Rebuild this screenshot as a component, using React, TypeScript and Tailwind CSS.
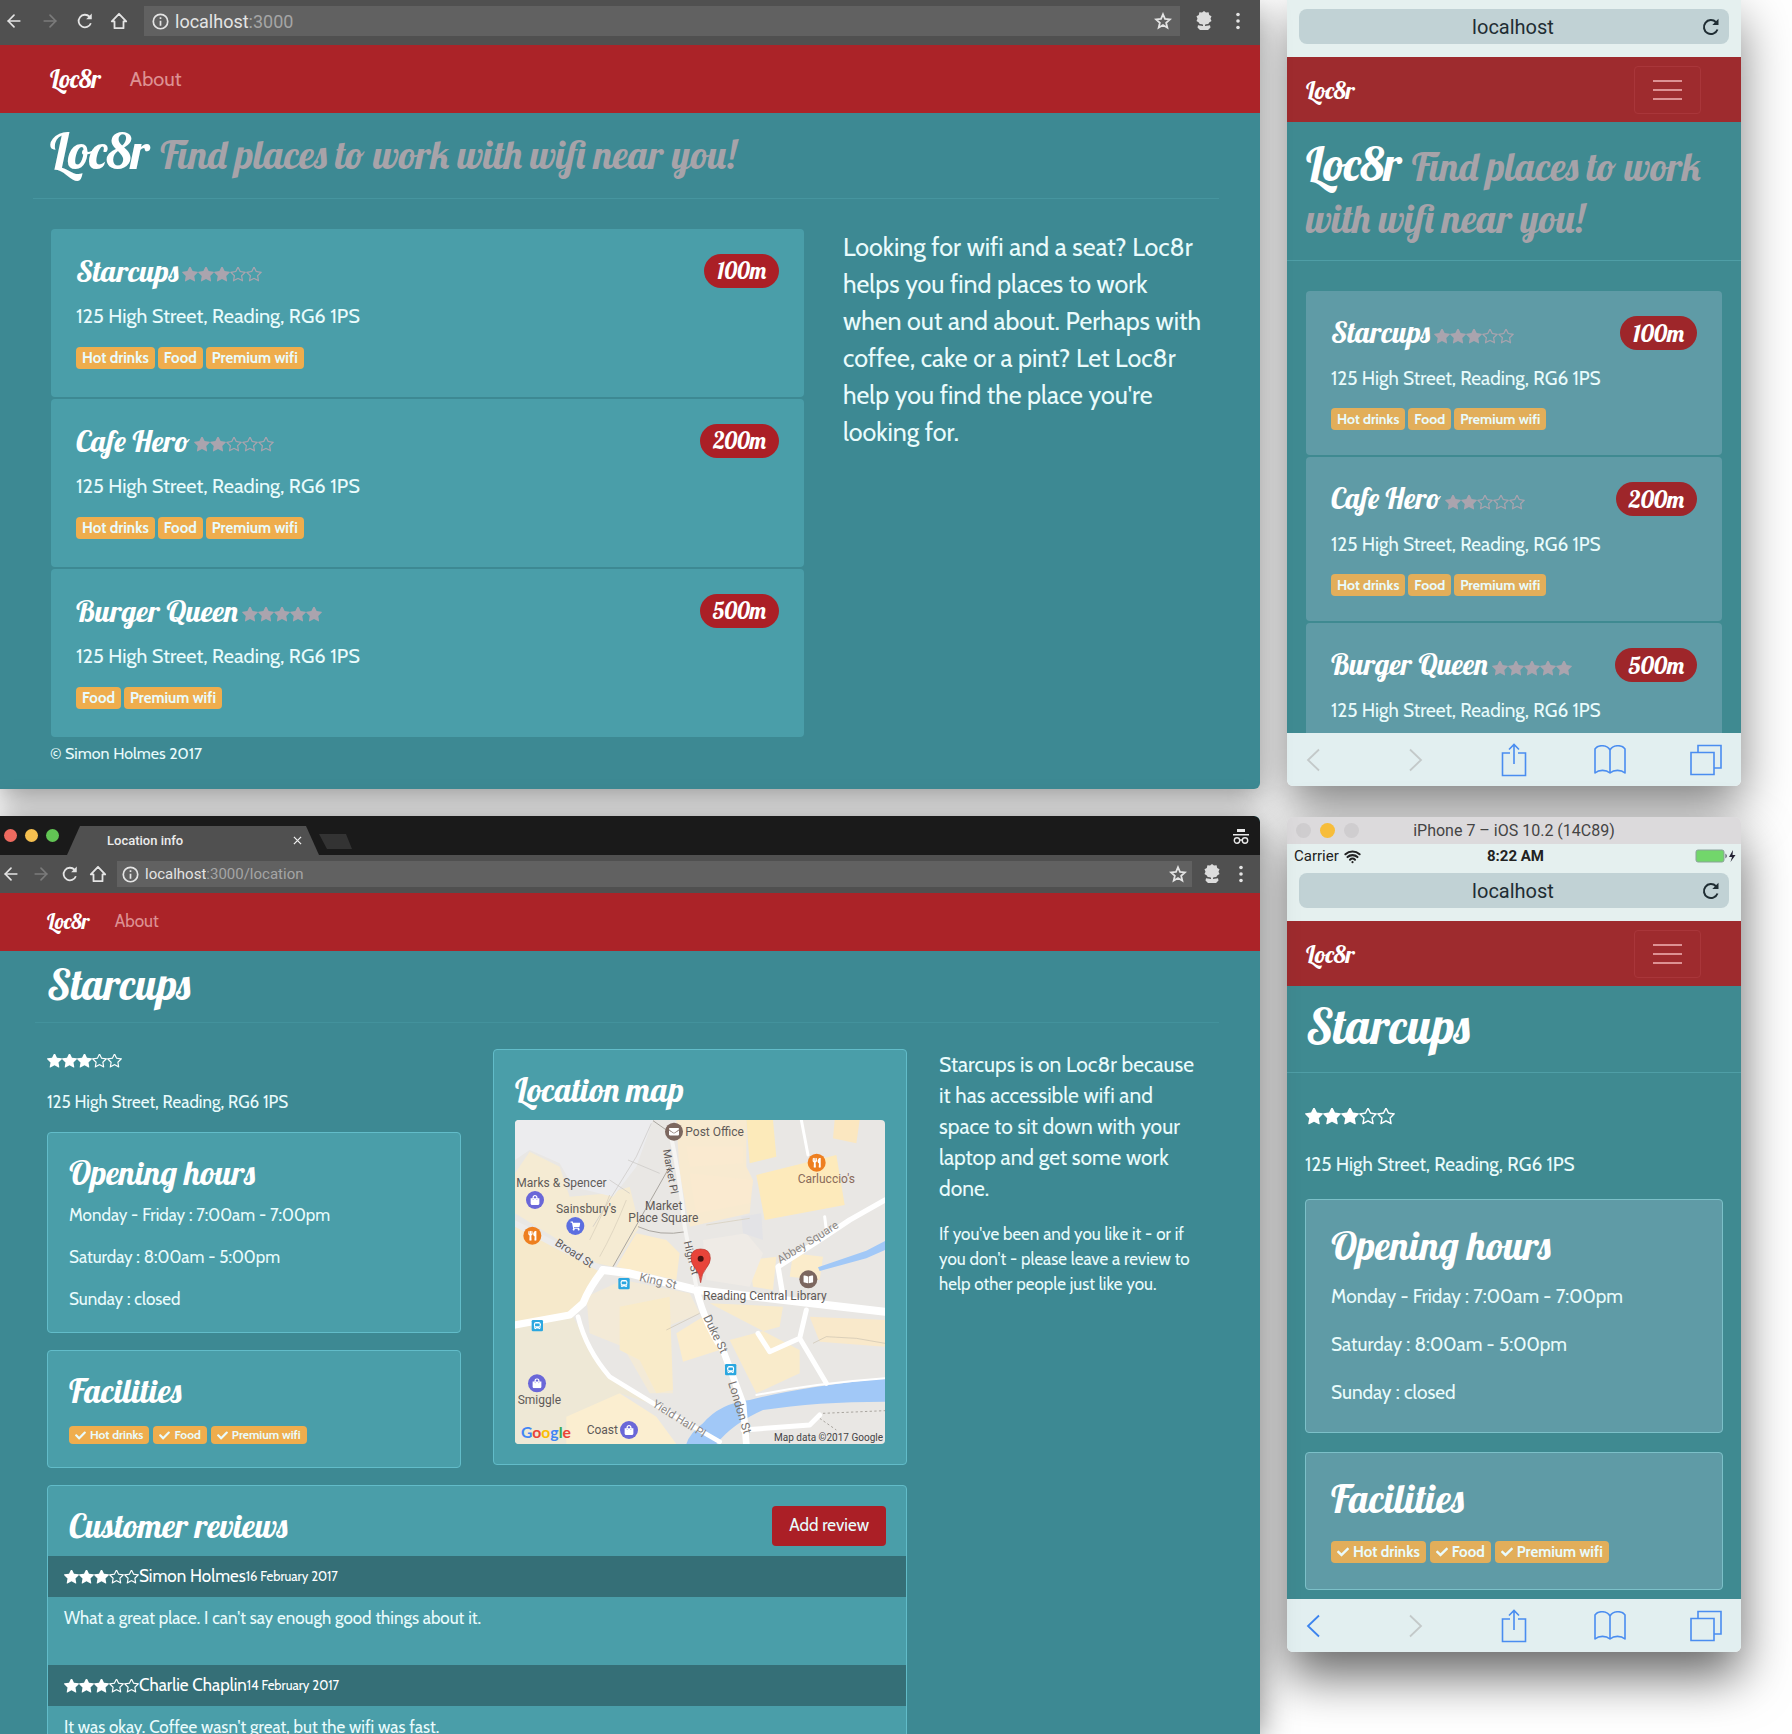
import React from 'react';
import { FaCheck, FaUtensils, FaShoppingCart, FaBookOpen, FaShoppingBag, FaEnvelope, FaBus } from 'react-icons/fa';
import { ArrowLeft, ArrowRight, Wifi } from 'lucide-react';

const STAR =
  'M1664 647q0 22-26 48l-363 354 86 500q1 7 1 20 0 21-10.5 35.5t-30.5 14.5q-19 0-40-12l-449-236-449 236q-22 12-40 12-21 0-31.5-14.5t-10.5-35.5q0-6 2-20l86-500-364-354q-25-27-25-48 0-37 56-46l502-73 225-455q19-41 49-41t49 41l225 455 502 73q56 9 56 46z';
const STAR_OUTLINE =
  'M1137 1004l306-297-422-62-189-382-189 382-422 62 306 297-73 421 378-199 377 199zm527-357q0 22-26 48l-363 354 86 500q1 7 1 20 0 50-41 50-19 0-40-12l-449-236-449 236q-22 12-40 12-21 0-31.5-14.5t-10.5-35.5q0-6 2-20l86-500-364-354q-25-27-25-48 0-37 56-46l502-73 225-455q19-41 49-41t49 41l225 455 502 73q56 9 56 46z';

const places = [
  { name: 'Starcups', rating: 3, distance: '100m', tags: ['Hot drinks', 'Food', 'Premium wifi'] },
  { name: 'Cafe Hero', rating: 2, distance: '200m', tags: ['Hot drinks', 'Food', 'Premium wifi'] },
  { name: 'Burger Queen', rating: 5, distance: '500m', tags: ['Food', 'Premium wifi'] },
];

const address = '125 High Street, Reading, RG6 1PS';
const hours = ['Monday - Friday : 7:00am - 7:00pm', 'Saturday : 8:00am - 5:00pm', 'Sunday : closed'];
const facilities = ['Hot drinks', 'Food', 'Premium wifi'];

const reviews = [
  { author: 'Simon Holmes', date: '16 February 2017', text: "What a great place. I can't say enough good things about it." },
  { author: 'Charlie Chaplin', date: '14 February 2017', text: "It was okay. Coffee wasn't great, but the wifi was fast." },
];

const Stars: React.FC<{ rating: number; className: string }> = ({ rating, className }) => (
  <span className="inline-flex shrink-0" role="img" aria-label={`${rating} out of 5`}>
    {[1, 2, 3, 4, 5].map((n) => (
      <svg key={n} viewBox="0 128 1664 1536" className={className} fill="currentColor">
        <path d={n <= rating ? STAR : STAR_OUTLINE} />
      </svg>
    ))}
  </span>
);

/* ---------- browser chrome ---------- */

const ReloadIcon: React.FC<{ className: string }> = ({ className }) => (
  <svg viewBox="0 0 20 20" className={className} fill="none" stroke="currentColor" strokeWidth="2">
    <path d="M16.5 12.5A7 7 0 1 1 15 5.2" />
    <path d="M17.5 1.8V8h-6.2z" fill="currentColor" stroke="none" />
  </svg>
);

const HomeIcon: React.FC = () => (
  <svg viewBox="0 0 20 20" className="size-[18px]" fill="none" stroke="currentColor" strokeWidth="2">
    <path d="M10 2L2 10.5h3V18h10v-7.5h3z" strokeLinejoin="round" />
  </svg>
);

const ChromeBar: React.FC<{ path: string; className: string; fieldClass: string; textClass: string; endClass: string }> = ({
  path,
  className,
  fieldClass,
  textClass,
  endClass,
}) => (
  <div className={`flex items-center bg-[#505050] text-[#e4e4e4] ${className}`}>
    <button aria-label="Back"><ArrowLeft className="size-5" /></button>
    <button aria-label="Forward" className="text-[#7b7b7b]"><ArrowRight className="size-5" /></button>
    <button aria-label="Reload"><ReloadIcon className="size-[18px]" /></button>
    <button aria-label="Home"><HomeIcon /></button>
    <div className={`flex flex-1 items-center bg-[#616161] ${fieldClass}`}>
      <label className="flex flex-1 items-center">
        <svg viewBox="0 0 20 20" className="mr-[6px] size-[17px]" fill="none" stroke="currentColor" strokeWidth="2">
          <circle cx="10" cy="10" r="8.5" />
          <path d="M10 9v6M10 5v2" />
        </svg>
        <input aria-label="Address" className={`field-sizing-content outline-none ${textClass}`} defaultValue="localhost" />
        <span className={`text-[#a5a5a5] ${textClass}`}>{path}</span>
      </label>
      <button aria-label="Bookmark">
        <svg viewBox="0 0 20 20" className="size-[18px]" fill="none" stroke="currentColor" strokeWidth="2">
          <path d="M10 2.5l2.2 5.2 5.6.5-4.3 3.7 1.3 5.5L10 14.5l-4.8 2.9 1.3-5.5-4.3-3.7 5.6-.5z" />
        </svg>
      </button>
    </div>
    <div className={`flex items-center ${endClass}`}>
      <button aria-label="Extension">
        <svg viewBox="0 0 16 20" className="h-5 w-4" fill="#dcdcdc">
          <path d="M8 0l2 1.6 2.6-.3.6 2.6 2.3 1.4-1 2.4 1 2.3-2.3 1.4-.9 1.6-2.3.2-2 1-2-1-2.3-.2-.9-1.6L.5 10l1-2.3-1-2.4 2.3-1.4.6-2.6 2.6.3z" />
          <path d="M7 13h2v2l5-.8.5 2.2-2.5 2.6H4l-2.500-2.600.5-2.200 5 .8z" />
        </svg>
      </button>
      <button aria-label="Menu">
        <svg viewBox="0 0 4 18" className="h-[18px] w-1" fill="currentColor">
          <circle cx="2" cy="2.5" r="1.8" />
          <circle cx="2" cy="9" r="1.8" />
          <circle cx="2" cy="15.5" r="1.8" />
        </svg>
      </button>
    </div>
  </div>
);

const TabStrip: React.FC = () => (
  <div className="flex h-[39px] items-end rounded-tr-md bg-[#1a1a1a] pl-1">
    <div className="flex gap-2 self-center">
      <span className="size-[13px] rounded-full bg-[#ee6a5f]" />
      <span className="size-[13px] rounded-full bg-[#f5bf4f]" />
      <span className="size-[13px] rounded-full bg-[#62c554]" />
    </div>
    <div className="ml-2 flex h-[29px] w-[252px] items-center justify-between bg-[#505050] pr-[17px] pl-10 text-[#ececec] [clip-path:polygon(13px_0,239px_0,100%_100%,0_100%)]">
      <span className="font-['Roboto',sans-serif] text-[13px] font-medium">Location info</span>
      <button aria-label="Close tab">
        <svg viewBox="0 0 10 10" className="size-[9px]" stroke="currentColor" strokeWidth="1.4">
          <path d="M1 1l8 8M9 1l-8 8" />
        </svg>
      </button>
    </div>
    <span className="mb-[6px] h-[15px] w-[33px] bg-[#333333] [clip-path:polygon(0_0,27px_0,100%_100%,8px_100%)]" />
    <svg viewBox="0 0 16 16" className="mr-[11px] ml-auto size-4 self-center" fill="none" stroke="#e8e8e8" strokeWidth="1.4">
      <path d="M4 1h8v3H4z" fill="#e8e8e8" stroke="none" />
      <path d="M0 6.7h16" />
      <circle cx="4" cy="12.5" r="2.7" />
      <circle cx="12" cy="12.5" r="2.7" />
      <path d="M6.5 12h3" />
    </svg>
  </div>
);

const SafariBar: React.FC = () => (
  <div className="bg-[#e5f0ef] px-3 pt-[5px] pb-[13px]">
    <div className="flex h-[35px] items-center rounded-lg bg-[#c1d2d5] pr-2 pl-[26px] text-[#1f2d33]">
      <input
        aria-label="Address"
        className="min-w-0 flex-1 text-center font-['Roboto',sans-serif] text-[20px] outline-none"
        defaultValue="localhost"
      />
      <button aria-label="Reload"><ReloadIcon className="size-5" /></button>
    </div>
  </div>
);

const SafariToolbar: React.FC<{ canGoBack?: boolean }> = ({ canGoBack }) => (
  <div className="flex h-[53px] items-center justify-between rounded-b-md bg-[#e2eff0] pr-[15px] pl-[6px] text-[#4a8df0]">
    <button aria-label="Back" className={`flex w-10 justify-center ${canGoBack ? 'text-[#3c84ee]' : 'text-[#c3c9c9]'}`}>
      <svg viewBox="0 0 14 24" className="h-6 w-[14px]" fill="none" stroke="currentColor" strokeWidth="1.8">
        <path d="M13 1.5L2 12l11 10.5" />
      </svg>
    </button>
    <button aria-label="Forward" className="flex w-12 justify-end pr-[14px] text-[#c3c9c9]">
      <svg viewBox="0 0 14 24" className="h-6 w-[14px]" fill="none" stroke="currentColor" strokeWidth="1.8">
        <path d="M1 1.5L12 12 1 22.5" />
      </svg>
    </button>
    <button aria-label="Share" className="flex w-10 justify-center">
      <svg viewBox="0 0 26 34" className="h-[34px] w-[26px]" fill="none" stroke="currentColor" strokeWidth="1.6">
        <path d="M9 10H1.5v22.5h23V10H17" />
        <path d="M13 21V1.5M8 6.5l5-5 5 5" />
      </svg>
    </button>
    <button aria-label="Bookmarks" className="flex w-10 justify-center">
      <svg viewBox="0 0 32 30" className="h-[30px] w-8" fill="none" stroke="currentColor" strokeWidth="1.6">
        <path d="M16 5C13-.5 4-.5 1 4v24c4-3.5 11-3.5 15 0 4-3.5 11-3.5 15 0V4C28-.5 19-.5 16 5v23" strokeLinejoin="round" />
      </svg>
    </button>
    <button aria-label="Tabs" className="flex w-10 justify-center">
      <svg viewBox="0 0 32 32" className="size-8" fill="none" stroke="currentColor" strokeWidth="1.6">
        <path d="M1 8.5h23v22H1zM8 8V1.5h23V24h-6.5" />
      </svg>
    </button>
  </div>
);

const SimulatorTop: React.FC = () => (
  <>
    <div className="grid h-[27px] grid-cols-[60px_1fr_60px] items-center rounded-t-md bg-[#dcdadc] px-[9px] font-['Roboto',sans-serif]">
      <div className="flex gap-[9px]">
        <span className="size-[15px] shrink-0 rounded-full bg-[#cfcdcf]" />
        <span className="size-[15px] shrink-0 rounded-full bg-[#f7bd3a]" />
        <span className="size-[15px] shrink-0 rounded-full bg-[#cfcdcf]" />
      </div>
      <span className="text-center text-[16px] text-[#444]">iPhone 7 – iOS 10.2 (14C89)</span>
    </div>
    <div className="grid h-6 grid-cols-3 items-center bg-[#e5f0ef] pr-1 pl-[7px] font-['Roboto',sans-serif] text-[15px] text-[#222]">
      <span className="flex items-center gap-[5px]">
        Carrier <Wifi className="size-[17px]" strokeWidth={3} />
      </span>
      <span className="text-center font-bold">8:22 AM</span>
      <svg viewBox="0 0 42 14" className="h-[14px] w-[42px] justify-self-end">
        <rect x="1" y="1" width="28" height="12" rx="2" fill="#72d66b" stroke="#8aa39a" />
        <path d="M30.5 4.5v5q2.500-2.500 0-5z" fill="#445" />
        <path d="M38 1l-4 7h3l-1.500 5 5-7h-3z" fill="#223" />
      </svg>
    </div>
  </>
);

/* ---------- site ---------- */

const DesktopNav: React.FC<{ className: string; brandClass: string; linkClass: string }> = ({ className, brandClass, linkClass }) => (
  <nav className={`flex items-center bg-[#ab2328] ${className}`}>
    <a href="#" className={`font-['Lobster',cursive] text-white ${brandClass}`}>Loc8r</a>
    <a href="#about" className={`text-[#dd9193] ${linkClass}`}>About</a>
  </nav>
);

const PhoneNav: React.FC = () => (
  <nav className="flex h-[65px] items-center justify-between bg-[#9e2b2e] pr-10 pl-[19px]">
    <a href="#" className="font-['Lobster',cursive] text-[24px] text-white">Loc8r</a>
    <button aria-label="Toggle navigation" className="flex h-12 w-[67px] flex-col items-center justify-center gap-[7px] rounded-sm border border-[#a9363a]">
      <span className="h-[2px] w-[29px] bg-[#dd9193]" />
      <span className="h-[2px] w-[29px] bg-[#dd9193]" />
      <span className="h-[2px] w-[29px] bg-[#dd9193]" />
    </button>
  </nav>
);

const PlaceCard: React.FC<{ place: (typeof places)[number]; phone?: boolean }> = ({ place, phone }) => (
  <li className={`rounded-sm px-[25px] ${phone ? 'bg-[#5f9ba6] pt-[25px] pb-[25px]' : 'bg-[#4a9ea9] pt-[25px] pb-[28px]'}`}>
    <div className="flex h-[34px] items-center justify-between">
      <h4 className={`flex items-center gap-1 font-['Lobster',cursive] text-white ${phone ? 'text-[29px]' : 'text-[30px]'}`}>
        {place.name}
        <span className="mt-[6px] flex text-[#aaa4ae]">
          <Stars rating={place.rating} className="h-[15px] w-4" />
        </span>
      </h4>
      <span
        className={`rounded-full px-[13px] font-['Lobster',cursive] leading-[34px] text-white ${
          phone ? 'bg-[#9e262a] text-[24px]' : 'bg-[#ab1f26] text-[23px]'
        }`}
      >
        {place.distance}
      </span>
    </div>
    <p className={`leading-[30px] ${phone ? 'mt-[14px] text-[19px]' : 'mt-[13px] text-[20px]'}`}>{address}</p>
    <ul className={`flex gap-[3px] font-bold ${phone ? 'mt-[14px] text-[14px]' : 'mt-4 text-[15px]'}`}>
      {place.tags.map((tag) => (
        <li key={tag} className={`rounded px-[6px] leading-[22px] ${phone ? 'bg-[#e2ae5a]' : 'bg-[#efad4d]'}`}>
          {tag}
        </li>
      ))}
    </ul>
  </li>
);

const FacilityTags: React.FC<{ phone?: boolean }> = ({ phone }) => (
  <ul className="flex gap-[4px]">
    {facilities.map((f) => (
      <li
        key={f}
        className={`flex items-center gap-1 rounded px-[6px] font-bold ${
          phone ? 'bg-[#e2ae5a] text-[15px] leading-[22px]' : 'bg-[#efad4d] text-[12px] leading-[18px]'
        }`}
      >
        <FaCheck className={phone ? 'size-3' : 'size-[11px]'} /> {f}
      </li>
    ))}
  </ul>
);

const Panel: React.FC<{ title: string; className: string; titleClass: string; children: React.ReactNode }> = ({
  title,
  className,
  titleClass,
  children,
}) => (
  <section className={`rounded border ${className}`}>
    <h2 className={`font-['Lobster',cursive] text-white ${titleClass}`}>{title}</h2>
    {children}
  </section>
);

const MapPin: React.FC<{ x: number; y: number; fill: string; icon: React.ElementType }> = ({ x, y, fill, icon: Icon }) => (
  <g>
    <circle cx={x} cy={y} r="27" fill={fill} />
    <Icon x={x - 15} y={y - 15} size={30} color="#fff" />
  </g>
);

const BusStop: React.FC<{ x: number; y: number }> = ({ x, y }) => (
  <g>
    <rect x={x - 17} y={y - 17} width="34" height="34" rx="4" fill="#2ba7e0" />
    <FaBus x={x - 11} y={y - 11} size={22} color="#fff" />
  </g>
);

const LocationMap: React.FC = () => (
  <svg viewBox="76 240 1110 972" className="w-full rounded" role="img" aria-label="Map of Reading town centre">
    <rect x="76" y="240" width="1110" height="972" fill="#e9e7e4" />
    {/* building blocks */}
    <path d="M76 540L330 690 250 820 76 860z" fill="#f6e9cb" />
    <path d="M76 860L250 830 350 1010 480 1090 390 1060 230 1212H76z" fill="#eee8d6" />
    <path d="M230 1130L390 1060 500 1130 560 1212H230z" fill="#fbeed0" />
    <path d="M76 400L120 335 210 380 240 470 360 460 420 440 450 560 370 680 320 670 76 520z" fill="#f5ebd3" />
    <path d="M560 240H770V380L790 420 780 520 600 560 570 400z" fill="#f8ead0" />
    <path d="M770 240H850L860 350 780 370z" fill="#fceaba" />
    <path d="M800 405L1040 345 1065 495 825 540z" fill="#fdeabb" />
    <path d="M1035 240H1110L1100 310 1030 295z" fill="#fbe7c0" />
    <path d="M440 580L530 600 570 640 560 720 380 680z" fill="#fbeccb" />
    <path d="M290 770L400 720 600 760 630 820 530 860 550 1060 480 1060 400 920 300 880z" fill="#f3ead7" />
    <path d="M390 800L540 770 550 1050 500 1060 450 960 390 930z" fill="#f9ebc9" />
    <path d="M560 880L640 830 690 930 580 965z" fill="#fbeccb" />
    <path d="M660 790L880 800 870 860 720 900 800 1060 930 1000 930 930" fill="#f9ebcb" />
    <path d="M960 830L1186 840V920L990 905z" fill="#f9e9cb" />
    <path d="M780 660L860 650 850 750 790 740zM910 640L1000 650 990 720 900 710z" fill="#fbeccb" />
    <path d="M600 400L790 420 780 490 620 520zM590 320H760V370L600 380z" fill="#faead0" />
    <path d="M640 600L770 580 820 640 780 740 650 720z" fill="#efebe6" />
    <path d="M755 530L815 520 820 600 760 580z" fill="#e3e3e6" />
    <path d="M76 240H490L440 380 370 470 250 440 210 370 120 330 76 360z" fill="#ececee" />
    {/* water */}
    <path d="M590 1212Q600 1180 640 1150 690 1090 780 1080 940 1040 1186 1015V1085Q980 1085 820 1110 730 1150 680 1212z" fill="#a1c8f7" />
    <path d="M985 682L1130 632 1186 603V630L1130 655 990 693z" fill="#a1c8f7" />
    {/* minor lines */}
    <g fill="none" stroke="#a9a59f" strokeWidth="3">
      <path d="M540 380L370 680M445 560Q510 590 590 575M490 242L530 270" />
      <path d="M485 250L440 350 310 560M415 360L510 400M360 420L420 460" strokeWidth="2" stroke="#c9c6c2" />
      <path d="M530 870L630 820M970 910L1010 890 1100 895 1186 910" strokeWidth="2" stroke="#cbc2b0" />
      <path d="M1000 1120L1186 1112" strokeDasharray="7 7" />
      <path d="M990 1135L1040 1170" strokeDasharray="7 7" />
      <path d="M360 465Q340 520 300 600M410 480Q370 580 330 650M650 555L780 535" strokeWidth="2" stroke="#d5ccb8" />
    </g>
    {/* roads */}
    <g fill="none" stroke="#fff" strokeLinecap="round" strokeLinejoin="round">
      <path d="M76 550L340 690" strokeWidth="18" stroke="#ecebea" />
      <path d="M340 690L420 700 620 750 1186 815" strokeWidth="24" />
      <path d="M340 690Q300 740 280 790L240 825 76 855" strokeWidth="22" />
      <path d="M265 830Q290 930 360 1010L490 1090 690 1205" strokeWidth="14" />
      <path d="M540 270Q570 400 585 560L620 740" strokeWidth="12" stroke="#f6f5f3" />
      <path d="M620 750Q650 860 700 930L760 1090 770 1212" strokeWidth="20" />
      <path d="M880 770L865 680 990 600 1080 540 1186 480" strokeWidth="16" />
      <path d="M935 240L955 345M1005 530L1010 570" strokeWidth="9" />
      <path d="M950 810L930 895 840 935 805 880M930 895L1010 1030M760 1170L960 1155 990 1125" strokeWidth="15" />
      <path d="M800 1065Q980 1030 1186 1015" strokeWidth="6" />
    </g>
    <g fontFamily="Roboto, sans-serif" fontSize="36" fill="#5f5a58">
      <text x="587" y="287">Post Office</text>
      <text x="80" y="442">Marks &amp; Spencer</text>
      <text x="199" y="519">Sainsbury's</text>
      <text x="522" y="509" textAnchor="middle">Market</text>
      <text x="521" y="546" textAnchor="middle">Place Square</text>
      <text x="924" y="430" fill="#8a6a5a">Carluccio's</text>
      <text x="640" y="781">Reading Central Library</text>
      <text x="84" y="1092">Smiggle</text>
      <text x="291" y="1183">Coast</text>
      <text x="194" y="614" transform="rotate(33 194 614)" fontSize="34">Broad St</text>
      <text x="447" y="722" transform="rotate(13 447 722)" fill="#8b8784">King St</text>
      <text x="520" y="330" transform="rotate(80 520 330)" fontSize="32">Market Pl</text>
      <text x="582" y="606" transform="rotate(76 582 606)" fontSize="32">High St</text>
      <text x="640" y="832" transform="rotate(64 640 832)" fill="#77736f">Duke St</text>
      <text x="715" y="1028" transform="rotate(73 715 1028)" fill="#77736f">London St</text>
      <text x="486" y="1098" transform="rotate(32 486 1098)" fill="#8b8784" fontSize="34">Yield Hall Pl</text>
      <text x="872" y="672" transform="rotate(-32 872 672)" fill="#8b8784" fontSize="34">Abbey Square</text>
      <text x="1180" y="1203" textAnchor="end" fontSize="30" fill="#444">Map data ©2017 Google</text>
    </g>
    <text x="94" y="1194" fontFamily="Lato, sans-serif" fontSize="47" fontWeight="700">
      <tspan fill="#4285f4">G</tspan>
      <tspan fill="#ea4335">o</tspan>
      <tspan fill="#fbbc05">o</tspan>
      <tspan fill="#4285f4">g</tspan>
      <tspan fill="#34a853">l</tspan>
      <tspan fill="#ea4335">e</tspan>
    </text>
    <MapPin x={553} y={275} fill="#7c675f" icon={FaEnvelope} />
    <MapPin x={981} y={368} fill="#ee7f1f" icon={FaUtensils} />
    <MapPin x={128} y={587} fill="#ee7f1f" icon={FaUtensils} />
    <MapPin x={136} y={480} fill="#6a67d8" icon={FaShoppingBag} />
    <MapPin x={257} y={558} fill="#5c6ee0" icon={FaShoppingCart} />
    <MapPin x={956} y={718} fill="#7c675f" icon={FaBookOpen} />
    <MapPin x={142} y={1030} fill="#6a67d8" icon={FaShoppingBag} />
    <MapPin x={418} y={1170} fill="#6a67d8" icon={FaShoppingBag} />
    <BusStop x={403} y={731} />
    <BusStop x={143} y={857} />
    <BusStop x={723} y={989} />
    <path d="M633 728Q630 700 616 684 604 670 604 655 604 627 633 627 662 627 662 655 662 670 650 684 636 700 633 728z" fill="#e8443a" stroke="#b8322a" strokeWidth="2" />
    <circle cx="633" cy="656" r="9" fill="#4a1210" />
  </svg>
);

/* ---------- windows ---------- */

const HomeDesktop: React.FC = () => (
  <section className="overflow-hidden rounded-br-md bg-[#3d8993] pb-[23px] shadow-[0_10px_30px_rgba(0,0,0,0.4)]">
    <ChromeBar
      path=":3000"
      className="h-[45px] gap-[16px] pr-[20px] pb-[3px] pl-[4px]"
      fieldClass="h-[30px] px-[8px]"
      textClass="font-['Roboto',sans-serif] text-[18px]"
      endClass="gap-[24px]"
    />
    <DesktopNav className="h-[68px] gap-[29px] px-[50px]" brandClass="text-[25px]" linkClass="text-[20px]" />
    <header className="mr-[41px] ml-[33px] h-[86px] border-b border-[#46959f] px-[17px] pt-[10px] font-['Lobster',cursive]">
      <h1 className="text-[49px] leading-[56px] text-white">
        Loc8r <small className="text-[39px] leading-none text-[#a7a3a9]">Find places to work with wifi near you!</small>
      </h1>
    </header>
    <div className="grid grid-cols-[753fr_376fr] gap-[39px] pt-[30px] pr-[41px] pl-[51px]">
      <ul className="flex flex-col gap-[2px]">
        {places.map((place) => (
          <PlaceCard key={place.name} place={place} />
        ))}
      </ul>
      <p className="pr-3 text-[25px] leading-[37px]">
        Looking for wifi and a seat? Loc8r helps you find places to work when out and about. Perhaps with coffee, cake or a pint? Let Loc8r help you find the
        place you're looking for.
      </p>
    </div>
    <footer className="px-[50px] pt-[5px] text-[16px] leading-6">© Simon Holmes 2017</footer>
  </section>
);

const LocationDesktop: React.FC = () => (
  <section className="min-h-0 flex-1 overflow-hidden rounded-tr-md bg-[#3d8993] shadow-[0_4px_34px_rgba(0,0,0,0.5)]">
    <TabStrip />
    <ChromeBar
      path=":3000/location"
      className="h-[38px] gap-[10px] pr-[17px] pl-px"
      fieldClass="h-[26px] px-[5px]"
      textClass="font-['Roboto',sans-serif] text-[15px]"
      endClass="gap-[19px] pl-[2px]"
    />
    <DesktopNav className="h-[58px] gap-[25px] px-[47px]" brandClass="text-[21px]" linkClass="text-[17px]" />
    <header className="mr-[41px] ml-[35px] border-b border-[#43929c] px-[12px] pt-[8px] pb-[11px] font-['Lobster',cursive]">
      <h1 className="text-[42px] leading-[52px] text-white">Starcups</h1>
    </header>
    <div className="grid grid-cols-[860fr_260fr] gap-8 pt-[26px] pr-[61px] pl-[47px]">
      <div>
        <div className="grid grid-cols-2 gap-8">
          <div>
            <div className="flex h-6 items-center text-white">
              <Stars rating={3} className="h-[14px] w-[15px]" />
            </div>
            <p className="mt-4 mb-[17px] text-[17px] leading-[26px]">{address}</p>
            <Panel title="Opening hours" className="border-[#62bcc9] bg-[#4a9ea9] px-[21px] pt-5 pb-5" titleClass="mb-[9px] text-[33px] leading-10">
              <div className="flex flex-col gap-[16px] text-[17px] leading-[26px]">
                {hours.map((line) => (
                  <p key={line}>{line}</p>
                ))}
              </div>
            </Panel>
            <Panel title="Facilities" className="mt-[17px] border-[#62bcc9] bg-[#4a9ea9] px-[21px] pt-5 pb-[23px]" titleClass="mb-[15px] text-[33px] leading-10">
              <FacilityTags />
            </Panel>
          </div>
          <Panel title="Location map" className="self-start border-[#62bcc9] bg-[#4a9ea9] px-[21px] pt-5 pb-[20px]" titleClass="mb-[10px] text-[33px] leading-10">
            <LocationMap />
          </Panel>
        </div>
        <section className="mt-[17px] rounded border border-[#62bcc9] bg-[#4a9ea9] pb-10">
          <div className="flex h-[70px] items-center justify-between pr-5 pl-[21px] pt-[10px]">
            <h2 className="font-['Lobster',cursive] text-[33px] text-white">Customer reviews</h2>
            <button className="h-10 rounded bg-[#ab1f26] px-[17px] text-[17px]">Add review</button>
          </div>
          {reviews.map((review) => (
            <article key={review.author}>
              <div className="flex h-[41px] items-center bg-[#356f77] px-4 text-white">
                <Stars rating={3} className="h-[14px] w-[15px]" />
                <span className="text-[17px]">{review.author}</span>
                <small className="text-[13px]">{review.date}</small>
              </div>
              <p className="h-[68px] px-4 pt-[9px] text-[17px] leading-6">{review.text}</p>
            </article>
          ))}
        </section>
      </div>
      <aside>
        <p className="text-[21px] leading-[31px]">Starcups is on Loc8r because it has accessible wifi and space to sit down with your laptop and get some work done.</p>
        <p className="mt-[18px] text-[17px] leading-[25px]">If you've been and you like it - or if you don't - please leave a review to help other people just like you.</p>
      </aside>
    </div>
  </section>
);

const HomePhone: React.FC = () => (
  <section className="rounded-b-md shadow-[0_20px_50px_rgba(0,0,0,0.5)]">
    <div className="bg-[#e5f0ef] pt-1">
      <SafariBar />
    </div>
    <PhoneNav />
    <div className="h-[611px] overflow-hidden bg-[#3f8a91]">
      <header className="border-b border-[#4f9ea6] px-[19px] pt-[16px] pb-[18px] font-['Lobster',cursive]">
        <h1 className="text-[47px] leading-[52px] text-white">
          Loc8r <small className="text-[39px] leading-none text-[#a7a3a9]">Find places to work with wifi near you!</small>
        </h1>
      </header>
      <ul className="flex flex-col gap-[2px] px-[19px] pt-[30px]">
        {places.map((place) => (
          <PlaceCard key={place.name} place={place} phone />
        ))}
      </ul>
    </div>
    <SafariToolbar />
  </section>
);

const LocationPhone: React.FC = () => (
  <section className="rounded-md shadow-[0_24px_50px_rgba(0,0,0,0.6)]">
    <SimulatorTop />
    <SafariBar />
    <PhoneNav />
    <div className="bg-[#3f8a91] pb-[9px]">
      <header className="border-b border-[#4f9ea6] px-[19px] pt-[12px] pb-[18px] font-['Lobster',cursive]">
        <h1 className="text-[48px] leading-[56px] text-white">Starcups</h1>
      </header>
      <div className="px-[18px] pt-[28px]">
        <div className="flex h-[30px] items-center text-white">
          <Stars rating={3} className="h-[17px] w-[18px]" />
        </div>
        <p className="my-[19px] text-[19px] leading-[30px]">{address}</p>
        <Panel title="Opening hours" className="border-[#7cc0c8] bg-[#5f9ba6] px-[25px] pt-6 pb-[24px]" titleClass="mb-[14px] text-[39px] leading-[44px]">
          <div className="flex flex-col gap-[18px] text-[19px] leading-[30px]">
            {hours.map((line) => (
              <p key={line}>{line}</p>
            ))}
          </div>
        </Panel>
        <Panel title="Facilities" className="mt-[19px] border-[#7cc0c8] bg-[#5f9ba6] px-[25px] pt-6 pb-[26px]" titleClass="mb-[20px] text-[39px] leading-[44px]">
          <FacilityTags phone />
        </Panel>
      </div>
    </div>
    <SafariToolbar canGoBack />
  </section>
);

const App: React.FC = () => (
  <main className="grid h-screen grid-cols-[1260fr_454fr] gap-[27px] overflow-hidden bg-white pr-[51px] font-['Cabin','Lato',sans-serif] text-[#e9fbfc]">
    <div className="z-10 flex min-h-0 flex-col gap-[27px]">
      <HomeDesktop />
      <LocationDesktop />
    </div>
    <div className="flex flex-col gap-[31px]">
      <HomePhone />
      <LocationPhone />
    </div>
  </main>
);

export default App;
